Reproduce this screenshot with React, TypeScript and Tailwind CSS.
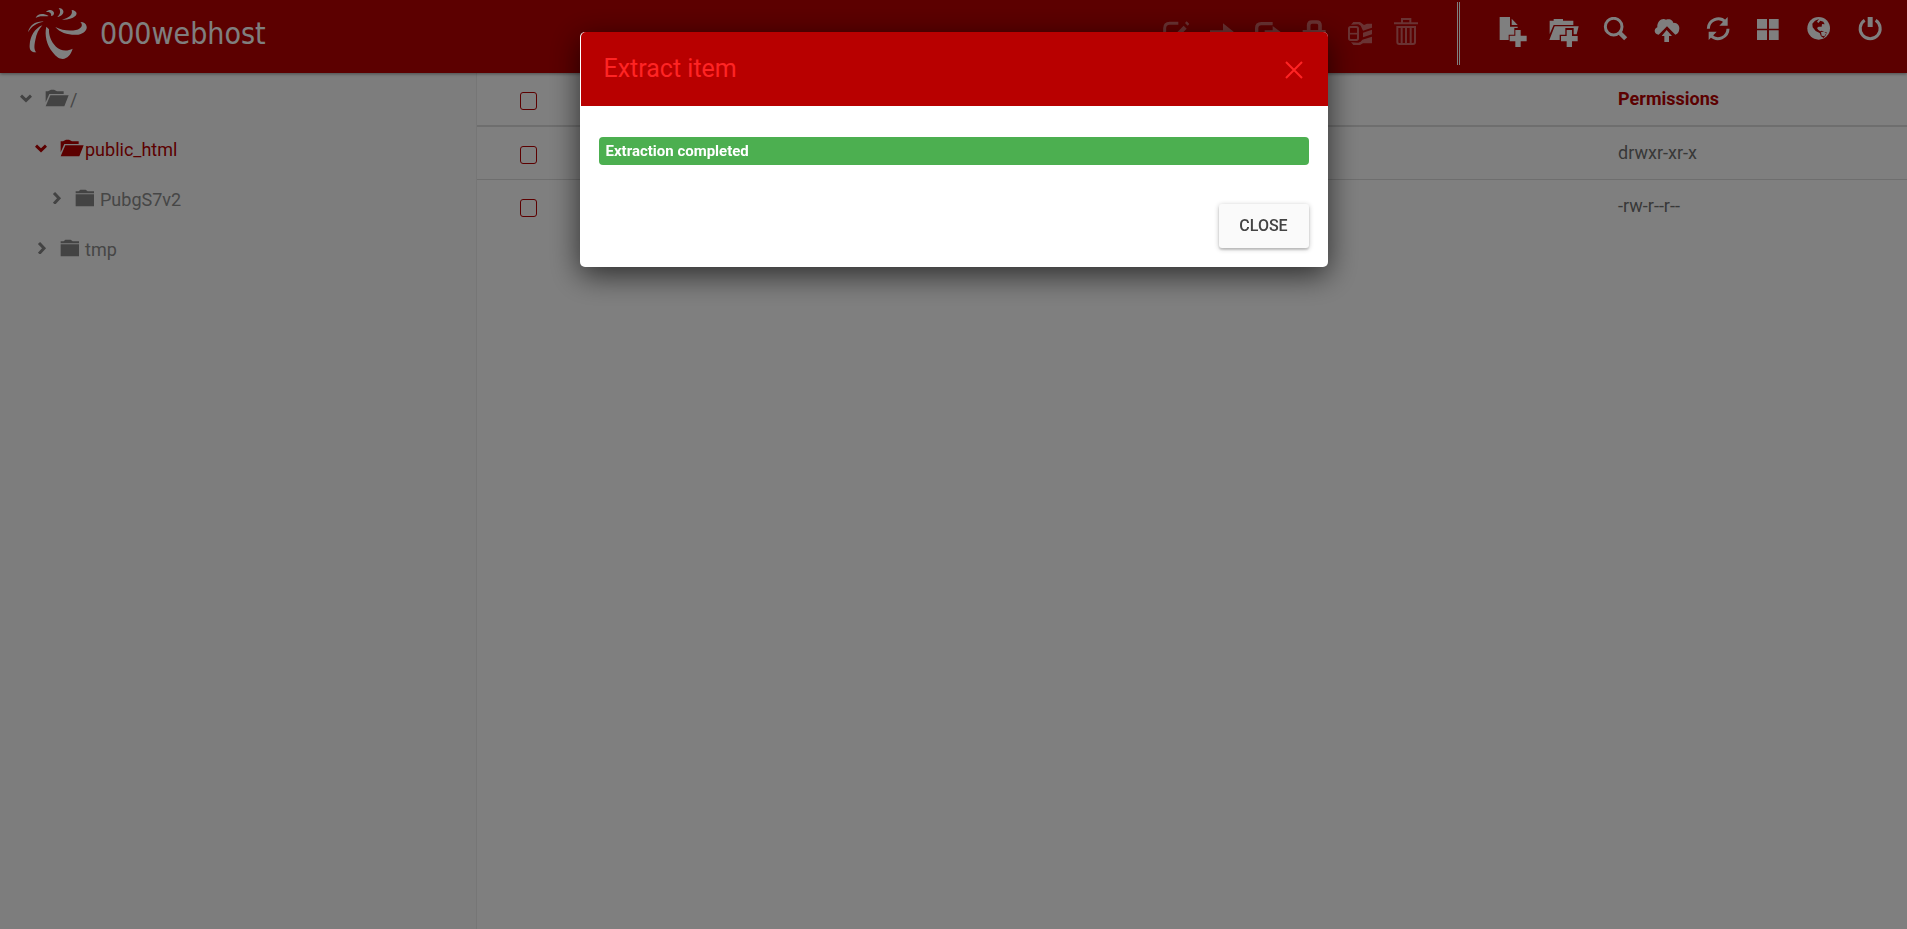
import React from "react";

type IconProps = { box: string; className?: string; children: React.ReactNode };

function Icon({ box, className = "", children }: IconProps) {
  return (
    <svg viewBox={box} className={className} fill="currentColor" aria-hidden="true">
      {children}
    </svg>
  );
}

function Logo() {
  return (
    <a href="#home" className="flex items-start gap-3 pt-2 pl-7 text-white">
      <svg viewBox="84 24 180 156" className="h-[52px] w-[60px]" fill="currentColor" aria-hidden="true">
        <path d="M139 80C133 105 140 135 158 157C170 172 178 177 188 177C202 175 212 165 218 146C200 155 180 152 168 140C152 124 146 105 147 88Z" />
        <path d="M166 81C180 99 210 107 235 104C250 101 262 90 260 80C259 71 252 66 241 66C250 74 246 86 228 90C208 94 185 91 166 81Z" />
        <path d="M127 76C104 85 90 110 89 135C88 148 92 158 109 157C102 150 102 138 106 120C109 102 116 88 127 76Z" />
        <path d="M84 97C89 75 108 63 131 65C110 69 95 78 84 97Z" />
        <path d="M107 54C112 41 128 38 146 48C135 50 118 46 107 54Z" />
        <path d="M138 36C146 28 158 28 162 38C163 44 158 48 153 48C155 42 152 34 138 36Z" />
        <path d="M176 24C188 24 194 34 188 42C184 48 178 50 172 51C180 44 184 34 176 24Z" />
        <path d="M215 30C231 32 233 42 226 48C216 57 200 60 186 59C204 54 220 46 215 30Z" />
      </svg>
      <span className="pt-2 font-['DejaVu_Sans_Condensed','Open_Sans',sans-serif] text-[30px] leading-9">
        000webhost
      </span>
    </a>
  );
}

const itemActions = [
  {
    label: "Edit",
    box: "63 54 84 84",
    art: (
      <>
        <path d="M112 70H86Q71 70 71 85V116Q71 130 86 130H118Q132 130 132 116V104" fill="none" stroke="currentColor" strokeWidth="9" />
        <path d="M128 77L137 86L113 110L101 113L104 101ZM132 69L137 64L145 72L140 77Z" />
      </>
    ),
  },
  { label: "Move", box: "198 54 84 84", art: <path d="M204 91H243V70L275 95L243 120V101H204Z" /> },
  {
    label: "Copy",
    box: "340 54 84 84",
    art: (
      <>
        <path d="M396 71H362Q348 71 348 85V116Q348 130 362 130H396" fill="none" stroke="currentColor" strokeWidth="10" />
        <path d="M372 91H396V78L421 97L396 116V103H372Z" />
      </>
    ),
  },
  {
    label: "Permissions",
    box: "475 54 84 84",
    art: (
      <>
        <rect x="483" y="90" width="69" height="45" />
        <path d="M501 94V76Q501 66 511 66H525Q535 66 535 76V94" fill="none" stroke="currentColor" strokeWidth="11" />
      </>
    ),
  },
  {
    label: "Extract",
    box: "615 54 84 84",
    art: (
      <>
        <rect x="624" y="81" width="27" height="39" rx="5" fill="none" stroke="currentColor" strokeWidth="6" />
        <path d="M624 101H651" stroke="currentColor" strokeWidth="5" />
        <path d="M630 74L637 66H657L669 75L678 71H693V83L666 92L659 77L652 73Z" />
        <path d="M666 98L693 89V103L666 112Z" />
        <path d="M630 127L637 135H657L666 130L693 130V110L664 119L659 125L652 128Z" />
      </>
    ),
  },
  {
    label: "Delete",
    box: "759 54 84 84",
    art: (
      <path
        d="M789 70V57H814V70M765 70H837M775 78V126Q775 132 781 132H822Q828 132 828 126V78M772 81H831M788 84V130M801 84V130M815 84V130"
        fill="none"
        stroke="currentColor"
        strokeWidth="6"
      />
    ),
  },
];

const toolbar = [
  {
    label: "New file",
    box: "142 51 90 90",
    art: (
      <>
        <path d="M147 51H178V80H201V84H191V104H174V120H147Z" />
        <path d="M183 56L201 75H183Z" />
        <path d="M194 90H210V107H228V124H210V141H194V124H177V107H194Z" />
      </>
    ),
  },
  {
    label: "New folder",
    box: "292 51 90 90",
    art: (
      <>
        <path d="M294 62H306V57H334V62H365V75H306L294 102Z" />
        <path d="M309 79H381L375 103H366V84H341V104H324V120H293Z" />
        <path d="M345 90H361V108H378V124H361V141H345V124H328V108H345Z" />
      </>
    ),
  },
  {
    label: "Search",
    box: "450 51 90 90",
    art: (
      <>
        <circle cx="491" cy="80" r="25" fill="none" stroke="currentColor" strokeWidth="9" />
        <path d="M509 98L527 116" stroke="currentColor" strokeWidth="13" />
      </>
    ),
  },
  {
    label: "Upload",
    box: "605 51 90 90",
    art: (
      <>
        <path d="M653 79L628 104C614 102 612 87 624 82C622 62 640 52 650 59C662 54 672 62 671 68C685 67 691 78 690 86C689 97 684 102 678 104Z" />
        <path d="M652 90L668 108H659V126H645V108H637Z" />
      </>
    ),
  },
  {
    label: "Refresh",
    box: "127 51 90 90",
    art: (
      <>
        <path d="M146 86A30 30 0 0 1 197 65M205 86A30 30 0 0 1 154 107" fill="none" stroke="currentColor" strokeWidth="9" />
        <path d="M204 51V77H179ZM147 120V95H171Z" />
      </>
    ),
  },
  {
    label: "Grid view",
    box: "279 51 90 90",
    art: <path d="M291 57H321V86H291ZM327 57H356V86H327ZM291 91H321V120H291ZM327 91H356V120H327Z" />,
  },
  {
    label: "Language",
    box: "431 51 90 90",
    art: (
      <>
        <circle cx="475" cy="85" r="34" />
        <path
          className="text-[#b80000]"
          d="M456 71L464 62L476 57L470 65L474 69L480 62L489 65L493 73L485 72L484 80L475 80L470 84L474 90L480 94L484 92L492 96L499 97L497 104L490 114L482 109L478 99L466 93L457 82Z"
        />
        <path d="M482 96L491 95L498 100L492 109L484 107Z" />
      </>
    ),
  },
  {
    label: "Log out",
    box: "586 51 90 90",
    art: (
      <>
        <path d="M615 61A30 30 0 1 0 648 61" fill="none" stroke="currentColor" strokeWidth="9" />
        <path d="M624 51H639V81H624Z" />
      </>
    ),
  },
];

function Header() {
  return (
    <header className="relative z-10 flex h-[73px] shrink-0 items-start justify-between bg-[#b80000] pr-3 text-white shadow-[0_1px_3px_rgba(0,0,0,0.4)]">
      <Logo />
      <nav className="flex items-start" aria-label="File actions">
        <div className="flex pt-[18px] opacity-40">
          {itemActions.map((a) => (
            <button key={a.label} type="button" aria-label={a.label} className="flex w-[46px] justify-center">
              <Icon box={a.box} className="size-7">{a.art}</Icon>
            </button>
          ))}
        </div>
        <div className="mt-0.5 ml-7 h-[63px] w-[3px] border-x border-white" />
        <div className="ml-[27px] flex pt-[17px]">
          {toolbar.map((a) => (
            <button key={a.label} type="button" aria-label={a.label} className="flex w-[51px] justify-center">
              <Icon box={a.box} className="size-[30px]">{a.art}</Icon>
            </button>
          ))}
        </div>
      </nav>
    </header>
  );
}

const tree = [
  { name: "/", indent: "pl-5", open: true, active: false },
  { name: "public_html", indent: "pl-[35px]", open: true, active: true },
  { name: "PubgS7v2", indent: "pl-[50px]", open: false, active: false },
  { name: "tmp", indent: "pl-[35px]", open: false, active: false },
];

function Tree() {
  return (
    <aside className="w-1/4 shrink-0 border-r border-[#ececec] bg-[#fafafa]">
      <ul>
        {tree.map((n) => (
          <li key={n.name}>
            <a
              href="#folder"
              className={`flex h-[50px] items-center ${n.indent} ${n.active ? "text-[#b80000]" : "text-[#868686]"}`}
            >
              <svg viewBox="0 0 36 36" className="mr-[13px] size-3" fill="none" stroke="currentColor" strokeWidth="9" aria-hidden="true">
                {n.open ? <path d="M3 11L18 25L33 11" /> : <path d="M12 3L27 19L12 35" />}
              </svg>
              <svg viewBox="0 0 75 54" className="h-[18px] w-[25px] shrink-0" fill="currentColor" aria-hidden="true">
                {n.open ? (
                  <path d="M2 7H9L18 2H27L36 7H56V15H13L2 40ZM16 19H71L58 52H2Z" />
                ) : (
                  <path d="M2 7H11L16 2H32L38 7H57V13H2ZM2 16H57V52H2Z" />
                )}
              </svg>
              <span className={`pt-[3px] text-lg leading-6 ${n.active ? "" : "text-[#8c8c8c]"}`}>{n.name}</span>
            </a>
          </li>
        ))}
      </ul>
    </aside>
  );
}

function Check({ label }: { label: string }) {
  return (
    <input
      type="checkbox"
      aria-label={label}
      className="mt-1 block h-[18px] w-[17px] appearance-none rounded-[3px] border border-[#b80000]"
    />
  );
}

function Files() {
  return (
    <main className="grow bg-white">
      <table className="w-full table-fixed border-collapse text-left text-lg leading-6">
        <thead>
          <tr className="h-[53px] border-b-2 border-[#dcdcdc] text-[#b80000]">
            <th className="w-[79.8%] pl-[43px]">
              <Check label="Select all" />
            </th>
            <th className="font-bold">Permissions</th>
          </tr>
        </thead>
        <tbody className="text-[#707070]">
          <tr className="h-[53px] border-b border-[#dcdcdc]">
            <td className="pl-[43px]">
              <Check label="Select folder" />
            </td>
            <td>drwxr-xr-x</td>
          </tr>
          <tr className="h-[53px]">
            <td className="pl-[43px]">
              <Check label="Select file" />
            </td>
            <td>-rw-r--r--</td>
          </tr>
        </tbody>
      </table>
    </main>
  );
}

function ExtractDialog() {
  return (
    <div className="fixed inset-0 z-20 flex items-start justify-center bg-black/50 pt-8">
      <section
        role="dialog"
        aria-modal="true"
        aria-labelledby="dialog-title"
        className="w-full max-w-[748px] rounded-[5px] bg-white shadow-[0_8px_30px_rgba(0,0,0,0.65)]"
      >
        <header className="ml-px flex h-[74px] items-center justify-between rounded-t-[5px] bg-[#b80000] pr-[25px] pl-[23px] text-[#ff2424]">
          <h2 id="dialog-title" className="text-[25px] leading-8">
            Extract item
          </h2>
          <button type="button" aria-label="Close dialog" className="pt-0.5">
            <svg viewBox="0 0 18 18" className="size-[18px]" fill="none" stroke="currentColor" strokeWidth="2" aria-hidden="true">
              <path d="M1 1L17 17M17 1L1 17" />
            </svg>
          </button>
        </header>
        <div className="px-[19px] pt-[31px] pb-[19px]">
          <p role="status" className="h-7 rounded bg-[#4caf50] px-[7px] text-[15px] leading-7 font-bold text-white">
            Extraction completed
          </p>
          <div className="mt-[39px] flex justify-end">
            <button
              type="button"
              className="h-11 w-[90px] rounded-[3px] bg-[#fafafa] text-base font-medium text-[#444444] shadow-[0_1px_5px_rgba(0,0,0,0.25),0_2px_2px_rgba(0,0,0,0.14)]"
            >
              CLOSE
            </button>
          </div>
        </div>
      </section>
    </div>
  );
}

export default function App() {
  return (
    <div className="flex min-h-screen flex-col font-[Roboto,sans-serif]">
      <Header />
      <div className="flex grow">
        <Tree />
        <Files />
      </div>
      <ExtractDialog />
    </div>
  );
}
